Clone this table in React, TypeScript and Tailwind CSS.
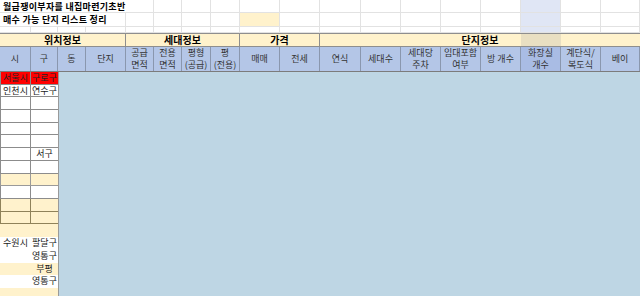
import React from 'react';

const gridCols =
  'grid grid-cols-[31px_27px_28px_40px_28px_28px_29px_29px_40px_40px_41px_40px_40px_40px_40px_40px_40px_39px]';

const font = { fontFamily: '"Noto Sans CJK KR", "Noto Sans", sans-serif' };

const subHeaders: string[][] = [
  ['시'], ['구'], ['동'], ['단지'],
  ['공급', '면적'], ['전용', '면적'], ['평형', '(공급)'], ['평', '(전용)'],
  ['매매'], ['전세'],
  ['연식'], ['세대수'], ['세대당', '주차'], ['임대포함', '여부'], ['방 개수'], ['화장실', '개수'], ['계단식/', '복도식'], ['베이'],
];

type Row = { h: string; a?: string; b?: string; bg: string; line: string };

const rows: Row[] = [
  { h: 'h-[13px]', a: '서울시', b: '구로구', bg: 'bg-[#ff0000]', line: 'border-[#8c8c8c]' },
  { h: 'h-[12px]', a: '인천시', b: '연수구', bg: 'bg-white', line: 'border-[#8c8c8c]' },
  { h: 'h-[13px]', bg: 'bg-white', line: 'border-[#8c8c8c]' },
  { h: 'h-[13px]', bg: 'bg-white', line: 'border-[#8c8c8c]' },
  { h: 'h-[12px]', bg: 'bg-white', line: 'border-[#8c8c8c]' },
  { h: 'h-[13px]', bg: 'bg-white', line: 'border-[#8c8c8c]' },
  { h: 'h-[13px]', b: '서구', bg: 'bg-white', line: 'border-[#8c8c8c]' },
  { h: 'h-[13px]', bg: 'bg-white', line: 'border-[#8c8c8c]' },
  { h: 'h-[12px]', bg: 'bg-[#fff2cc]', line: 'border-[#9a9a9a]' },
  { h: 'h-[13px]', bg: 'bg-white', line: 'border-[#8c8c8c]' },
  { h: 'h-[13px]', bg: 'bg-[#fff2cc]', line: 'border-[#8f8259]' },
  { h: 'h-[12px]', bg: 'bg-[#fff2cc]', line: 'border-[#8f8259]' },
  { h: 'h-[13px]', bg: 'bg-[#fff2cc]', line: 'border-transparent' },
  { h: 'h-[13px]', a: '수원시', b: '팔달구', bg: 'bg-white', line: 'border-transparent' },
  { h: 'h-[13px]', b: '영통구', bg: 'bg-white', line: 'border-transparent' },
  { h: 'h-[12px]', b: '부평', bg: 'bg-[#fff2cc]', line: 'border-transparent' },
  { h: 'h-[13px]', b: '영통구', bg: 'bg-white', line: 'border-transparent' },
  { h: 'h-[13px]', bg: 'bg-[#fff2cc]', line: 'border-transparent' },
];

function TopRow({ height, title, span, yellowAt }: { height: string; title?: string; span: number; yellowAt?: number }) {
  const cells = [];
  let start = 0;
  if (title) {
    cells.push(
      <div
        key="t"
        className={`${height} border-r border-b border-[#e2e2e2] pl-[3px] text-[9px] font-bold text-black whitespace-nowrap leading-[13px] tracking-[0.3px]`}
        style={{ gridColumn: `span ${span} / span ${span}` }}
      >
        {title}
      </div>
    );
    start = span;
  }
  for (let i = start; i < 18; i++) {
    const bg = i === yellowAt ? 'bg-[#fff2cc]' : i === 15 ? 'bg-[#e0e6f5]' : 'bg-white';
    cells.push(<div key={i} className={`${height} ${bg} border-r border-b border-[#e2e2e2]`} />);
  }
  return <>{cells}</>;
}

export default function App() {
  return (
    <div className="w-[640px] h-[296px] overflow-hidden bg-white text-[#222]" style={font}>
      {/* Title rows */}
      <div className={gridCols}>
        <TopRow height="h-[13px]" title="월급쟁이부자를 내집마련기초반" span={5} />
        <TopRow height="h-[14px]" title="매수 가능 단지 리스트 정리" span={4} yellowAt={8} />
        <TopRow height="h-[6px]" span={0} />
      </div>

      {/* Group header */}
      <div className="grid grid-cols-[126px_114px_80px_320px] h-[14px] bg-[#fff2cc] border-y border-[#8e8e8e] text-[10px] font-bold text-black leading-[12px]">
        <div className="text-center border-r border-[#8e8e8e]">위치정보</div>
        <div className="text-center border-r border-[#8e8e8e]">세대정보</div>
        <div className="text-center border-r border-[#8e8e8e]">가격</div>
        <div className="relative text-center">
          <div className="absolute top-0 bottom-0 left-[201px] w-[40px] bg-[#6b6f8a]/15" />
          <span className="relative">단지정보</span>
        </div>
      </div>

      {/* Column header */}
      <div className={`${gridCols} h-[25px] border-b border-[#7c7c7c]`}>
        {subHeaders.map((lines, i) => (
          <div
            key={i}
            className={`flex flex-col items-center justify-center border-r border-[#8a97ae] text-[9px] leading-[12px] text-[#333] ${
              i === 15 ? 'bg-[#a9bce4]' : 'bg-[#b4c6e7]'
            }`}
          >
            {lines.map(l => (
              <span key={l} className="whitespace-nowrap">{l}</span>
            ))}
          </div>
        ))}
      </div>

      {/* Data */}
      <div className="flex">
        <div className="grid grid-cols-[31px_27px] shrink-0">
          {rows.map((r, i) => (
            <React.Fragment key={i}>
              <div className={`${r.h} ${r.bg} border-l border-r border-b ${r.line} text-center text-[9px] leading-[12px] text-[#222] whitespace-nowrap overflow-hidden`}>
                {r.a}
              </div>
              <div className={`${r.h} ${r.bg} border-b ${r.line} text-center text-[9px] leading-[12px] text-[#222] whitespace-nowrap overflow-hidden`}>
                {r.b}
              </div>
            </React.Fragment>
          ))}
        </div>
        <div className="flex-1 bg-[#bed6e4] border-l border-[#9a9a9a]" />
      </div>
    </div>
  );
}
